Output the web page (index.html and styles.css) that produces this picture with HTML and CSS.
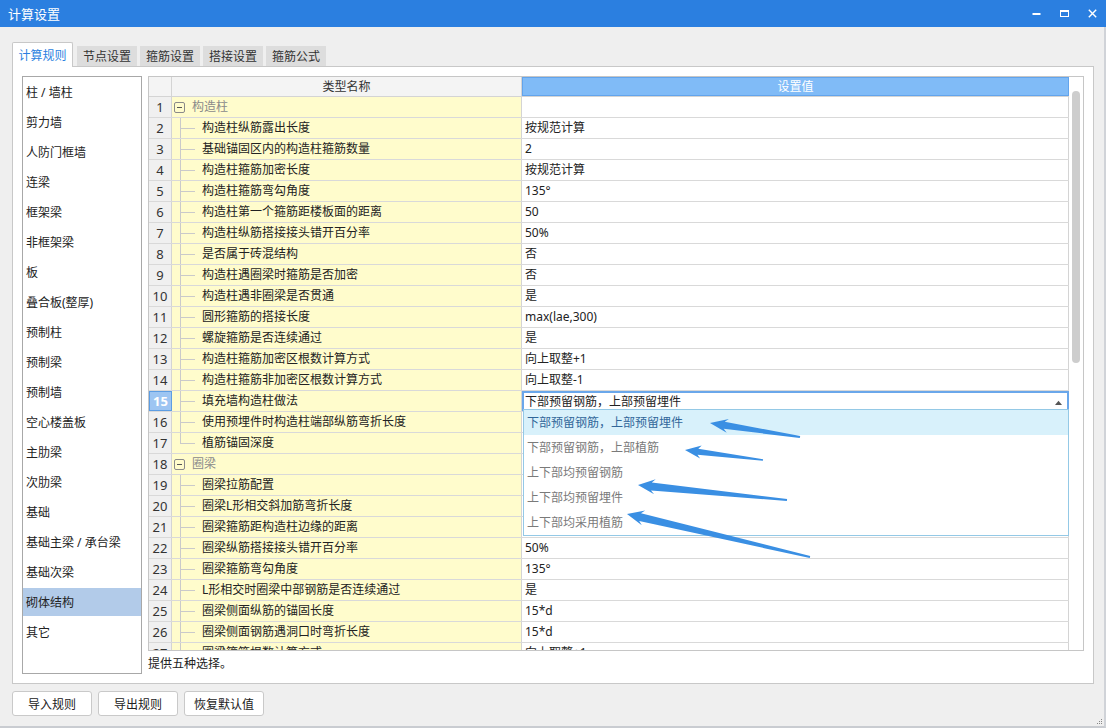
FILE: index.html
```html
<!DOCTYPE html>
<html lang="zh-CN">
<head>
<meta charset="utf-8">
<title>计算设置</title>
<link rel="stylesheet" href="styles.css">
</head>
<body>
<div class="titlebar">
  <div class="title">计算设置</div>
  <div class="winctl">
    <span><svg width="9" height="9" viewBox="0 0 9 9"><rect x="0.5" y="4" width="8" height="2" fill="#fff"/></svg></span>
    <span><svg width="9" height="9" viewBox="0 0 9 9"><rect x="0.5" y="1.5" width="8" height="6" fill="none" stroke="#fff" stroke-width="1"/><rect x="0.5" y="1" width="8" height="2" fill="#fff"/></svg></span>
    <span><svg width="9" height="9" viewBox="0 0 9 9"><path d="M0.8 0.8L8.2 8.2M8.2 0.8L0.8 8.2" stroke="#fff" stroke-width="1.4"/></svg></span>
  </div>
</div>
<div class="frame">
  <div class="tabbar">
    <div class="tab active">计算规则</div>
    <div class="tab first">节点设置</div>
    <div class="tab">箍筋设置</div>
    <div class="tab">搭接设置</div>
    <div class="tab">箍筋公式</div>
  </div>
  <div class="panel">
    <div class="list">
      <div class="item">柱 / 墙柱</div>
      <div class="item">剪力墙</div>
      <div class="item">人防门框墙</div>
      <div class="item">连梁</div>
      <div class="item">框架梁</div>
      <div class="item">非框架梁</div>
      <div class="item">板</div>
      <div class="item">叠合板(整厚)</div>
      <div class="item">预制柱</div>
      <div class="item">预制梁</div>
      <div class="item">预制墙</div>
      <div class="item">空心楼盖板</div>
      <div class="item">主肋梁</div>
      <div class="item">次肋梁</div>
      <div class="item">基础</div>
      <div class="item">基础主梁 / 承台梁</div>
      <div class="item">基础次梁</div>
      <div class="item sel">砌体结构</div>
      <div class="item">其它</div>
    </div>
    <div class="right">
      <div class="grid">
        <div class="table">
          <div class="hdr">
            <div class="hnum"></div>
            <div class="hname">类型名称</div>
            <div class="hval">设置值</div>
          </div>
          <div class="row"><div class="num">1</div><div class="name group"><span class="box"></span>构造柱</div><div class="val"></div></div>
          <div class="row"><div class="num">2</div><div class="name"><span class="tree"></span>构造柱纵筋露出长度</div><div class="val">按规范计算</div></div>
          <div class="row"><div class="num">3</div><div class="name"><span class="tree"></span>基础锚固区内的构造柱箍筋数量</div><div class="val">2</div></div>
          <div class="row"><div class="num">4</div><div class="name"><span class="tree"></span>构造柱箍筋加密长度</div><div class="val">按规范计算</div></div>
          <div class="row"><div class="num">5</div><div class="name"><span class="tree"></span>构造柱箍筋弯勾角度</div><div class="val">135°</div></div>
          <div class="row"><div class="num">6</div><div class="name"><span class="tree"></span>构造柱第一个箍筋距楼板面的距离</div><div class="val">50</div></div>
          <div class="row"><div class="num">7</div><div class="name"><span class="tree"></span>构造柱纵筋搭接接头错开百分率</div><div class="val">50%</div></div>
          <div class="row"><div class="num">8</div><div class="name"><span class="tree"></span>是否属于砖混结构</div><div class="val">否</div></div>
          <div class="row"><div class="num">9</div><div class="name"><span class="tree"></span>构造柱遇圈梁时箍筋是否加密</div><div class="val">否</div></div>
          <div class="row"><div class="num">10</div><div class="name"><span class="tree"></span>构造柱遇非圈梁是否贯通</div><div class="val">是</div></div>
          <div class="row"><div class="num">11</div><div class="name"><span class="tree"></span>圆形箍筋的搭接长度</div><div class="val">max(lae,300)</div></div>
          <div class="row"><div class="num">12</div><div class="name"><span class="tree"></span>螺旋箍筋是否连续通过</div><div class="val">是</div></div>
          <div class="row"><div class="num">13</div><div class="name"><span class="tree"></span>构造柱箍筋加密区根数计算方式</div><div class="val">向上取整+1</div></div>
          <div class="row"><div class="num">14</div><div class="name"><span class="tree"></span>构造柱箍筋非加密区根数计算方式</div><div class="val">向上取整-1</div></div>
          <div class="row"><div class="num cur">15</div><div class="name"><span class="tree"></span>填充墙构造柱做法</div>
            <div class="val edit"><span>下部预留钢筋，上部预留埋件</span>
              <svg class="caret" width="7" height="5" viewBox="0 0 7 5"><path d="M0 5L3.5 0.8L7 5Z" fill="#555"/></svg>
              <div class="dd">
                <div class="opt hl">下部预留钢筋，上部预留埋件</div>
                <div class="opt">下部预留钢筋，上部植筋</div>
                <div class="opt">上下部均预留钢筋</div>
                <div class="opt">上下部均预留埋件</div>
                <div class="opt">上下部均采用植筋</div>
              </div>
            </div>
          </div>
          <div class="row"><div class="num">16</div><div class="name"><span class="tree"></span>使用预埋件时构造柱端部纵筋弯折长度</div><div class="val"></div></div>
          <div class="row"><div class="num">17</div><div class="name"><span class="tree last"></span>植筋锚固深度</div><div class="val"></div></div>
          <div class="row"><div class="num">18</div><div class="name group"><span class="box"></span>圈梁</div><div class="val"></div></div>
          <div class="row"><div class="num">19</div><div class="name"><span class="tree"></span>圈梁拉筋配置</div><div class="val"></div></div>
          <div class="row"><div class="num">20</div><div class="name"><span class="tree"></span>圈梁L形相交斜加筋弯折长度</div><div class="val"></div></div>
          <div class="row"><div class="num">21</div><div class="name"><span class="tree"></span>圈梁箍筋距构造柱边缘的距离</div><div class="val"></div></div>
          <div class="row"><div class="num">22</div><div class="name"><span class="tree"></span>圈梁纵筋搭接接头错开百分率</div><div class="val">50%</div></div>
          <div class="row"><div class="num">23</div><div class="name"><span class="tree"></span>圈梁箍筋弯勾角度</div><div class="val">135°</div></div>
          <div class="row"><div class="num">24</div><div class="name"><span class="tree"></span>L形相交时圈梁中部钢筋是否连续通过</div><div class="val">是</div></div>
          <div class="row"><div class="num">25</div><div class="name"><span class="tree"></span>圈梁侧面纵筋的锚固长度</div><div class="val">15*d</div></div>
          <div class="row"><div class="num">26</div><div class="name"><span class="tree"></span>圈梁侧面钢筋遇洞口时弯折长度</div><div class="val">15*d</div></div>
          <div class="row"><div class="num">27</div><div class="name"><span class="tree"></span>圈梁箍筋根数计算方式</div><div class="val">向上取整+1</div></div>
        </div>
        <div class="vs"><div class="thumb"></div></div>
      </div>
      <div class="desc">提供五种选择。</div>
    </div>
  </div>
  <div class="btns">
    <div class="btn">导入规则</div>
    <div class="btn">导出规则</div>
    <div class="btn">恢复默认值</div>
  </div>
</div>
<svg class="grip" width="7" height="7" viewBox="0 0 7 7"><rect x="5" y="1" width="1" height="1" fill="#888"/><rect x="3" y="3" width="1" height="1" fill="#888"/><rect x="5" y="3" width="1" height="1" fill="#888"/><rect x="1" y="5" width="1" height="1" fill="#888"/><rect x="3" y="5" width="1" height="1" fill="#888"/><rect x="5" y="5" width="1" height="1" fill="#888"/></svg>
<svg class="arrows" width="1106" height="728" viewBox="0 0 1106 728">
  <g fill="#3a8fe3">
    <polygon points="710,423 726.7,432.7 723.7,428.7 799.8,438.0 800.2,436.0 724.7,421.7 728.9,418.9"/>
    <polygon points="685,450 700.1,458.5 697.5,454.7 762.9,460.8 763.1,459.2 698.3,448.7 701.7,445.6"/>
    <polygon points="638,485 654.1,494.2 651.0,490.4 786.9,501.0 787.1,499.0 651.8,482.4 655.7,479.2"/>
    <polygon points="627,514 641.8,525.2 639.2,521.0 809.8,558.0 810.2,556.0 641.0,513.2 645.2,510.6"/>
  </g>
</svg>
</body>
</html>
```

FILE: styles.css
```css
* { box-sizing: border-box; }
html, body { margin: 0; padding: 0; }
body {
  width: 1106px;
  height: 728px;
  background: #efefef;
  font-family: "Noto Sans", "Noto Sans CJK SC", sans-serif;
  font-size: 12px;
  color: #222;
  overflow: hidden;
  position: relative;
}
.titlebar {
  height: 27px;
  background: #2b7fe0;
  color: #fff;
  display: flex;
  align-items: center;
  padding-left: 8px;
  font-size: 13px;
}
.title { flex: 1; }
.winctl { display: flex; height: 27px; }
.winctl span {
  width: 28px;
  display: flex;
  align-items: center;
  justify-content: center;
}
.frame {
  height: 701px;
  border-right: 2px solid #d0d3d8;
  border-bottom: 2px solid #c9ccd1;
  padding: 15px 0 0 12px;
}
.tabbar {
  display: flex;
  align-items: flex-end;
  width: 1082px;
  height: 25px;
  border-bottom: 1px solid #c8c8c8;
}
.tab {
  height: 20px;
  width: 60px;
  margin-left: 3px;
  background: #dddddd;
  display: flex;
  align-items: center;
  justify-content: center;
  color: #333;
}
.tab.first { margin-left: 4px; }
.tab.active {
  height: 25px;
  width: 61px;
  margin-left: 0;
  margin-bottom: -1px;
  background: #fff;
  border: 1px solid #c8c8c8;
  border-bottom: none;
  border-radius: 2px 2px 0 0;
  color: #2b7fe0;
}
.panel {
  width: 1082px;
  height: 617px;
  background: #fff;
  border: 1px solid #c8c8c8;
  border-top: none;
  padding: 9px;
  display: flex;
  gap: 6px;
}
.list {
  width: 120px;
  height: 598px;
  border: 1px solid #a8a8a8;
  padding-top: 1px;
  display: flex;
  flex-direction: column;
  gap: 2px;
}
.item {
  height: 28px;
  flex: none;
  display: flex;
  align-items: center;
  padding-left: 3px;
  color: #222;
}
.item.sel { background: #b2cbe9; }
.right {
  width: 936px;
  display: flex;
  flex-direction: column;
}
.grid {
  height: 575px;
  border: 1px solid #c6c6c6;
  display: flex;
  flex: none;
}
.table {
  width: 920px;
  overflow: hidden;
  line-height: 20px;
}
.hdr {
  display: flex;
  height: 20px;
  border-bottom: 1px solid #d4d4d4;
  background: #f4f4f4;
  color: #333;
}
.hnum { width: 23px; border-right: 1px solid #d4d4d4; }
.hname {
  width: 350px;
  border-right: 1px solid #d4d4d4;
  text-align: center;
  line-height: 19px;
}
.hval {
  width: 547px;
  background: #80bbf7;
  border: 1px solid #62a4ec;
  color: #fff;
  text-align: center;
  line-height: 17px;
}
.row {
  display: flex;
  height: 21px;
  border-bottom: 1px solid #d9d9d9;
}
.num {
  width: 23px;
  border-right: 1px solid #d4d4d4;
  background: #f0f0f0;
  display: flex;
  align-items: center;
  justify-content: center;
  font-size: 13px;
  color: #333;
}
.num.cur {
  background: #9dc5f2;
  border: 1px solid #5d9de3;
  color: #fff;
  font-weight: bold;
}
.name {
  width: 350px;
  border-right: 1px solid #d4d4d4;
  background: #fffccc;
  display: flex;
  align-items: center;
  padding-left: 8px;
  white-space: nowrap;
}
.name.group { color: #8a8a8a; padding-left: 2px; }
.box {
  width: 11px;
  height: 11px;
  border: 1px solid #8a8a8a;
  border-radius: 2px;
  margin-right: 7px;
  display: flex;
  align-items: center;
  justify-content: center;
}
.box::after {
  content: "";
  width: 5px;
  height: 1px;
  background: #555;
}
.tree {
  align-self: stretch;
  width: 15px;
  margin-right: 7px;
  background:
    linear-gradient(#cacaca, #cacaca) 0 0 / 1px 100% no-repeat,
    linear-gradient(#cacaca, #cacaca) 0 10px / 100% 1px no-repeat;
}
.tree.last {
  background:
    linear-gradient(#cacaca, #cacaca) 0 0 / 1px 11px no-repeat,
    linear-gradient(#cacaca, #cacaca) 0 10px / 100% 1px no-repeat;
}
.val {
  width: 547px;
  border-right: 1px solid #d4d4d4;
  display: flex;
  align-items: center;
  padding-left: 3px;
  white-space: nowrap;
}
.val.edit {
  border: 2px solid #6aa7ea;
  border-bottom: none;
  padding-left: 1px;
  position: relative;
}
.caret { margin-left: auto; margin-right: 5px; }
.dd {
  position: absolute;
  top: 16px;
  left: -1px;
  right: -2px;
  height: 127px;
  background: #fff;
  border: 1px solid #94c9e6;
  z-index: 2;
}
.opt {
  height: 25px;
  display: flex;
  align-items: center;
  padding-left: 3px;
  color: #7a7a7a;
}
.opt.hl { background: #d8f1fb; color: #31679a; }
.vs { width: 14px; padding: 14px 0 0 3px; }
.thumb {
  width: 8px;
  height: 272px;
  border-radius: 4px;
  background: #cdcdcd;
}
.desc {
  padding-top: 5px;
  line-height: 16px;
  color: #222;
}
.btns {
  display: flex;
  gap: 6px;
  margin-top: 7px;
}
.btn {
  width: 80px;
  height: 25px;
  border: 1px solid #c9c9c9;
  border-radius: 3px;
  background: #fff;
  display: flex;
  align-items: center;
  justify-content: center;
  color: #222;
}
.grip { position: absolute; right: 3px; bottom: 3px; }
.arrows { position: absolute; top: 0; left: 0; pointer-events: none; z-index: 10; }
```
